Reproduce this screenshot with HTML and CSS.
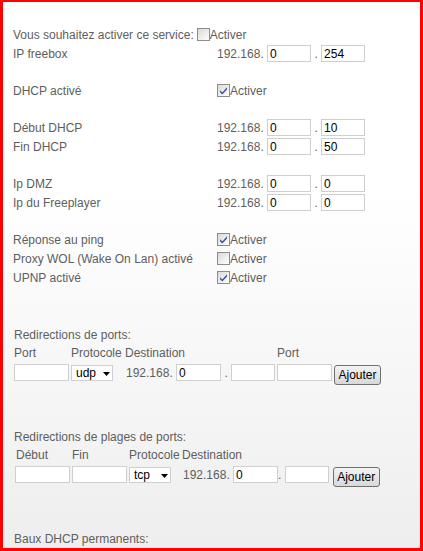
FILE: index.html
```html
<!DOCTYPE html>
<html lang="fr">
<head>
<meta charset="utf-8">
<title>Freebox</title>
<link rel="stylesheet" href="styles.css">
</head>
<body>
<div class="frame">
  <div class="form">
    <div class="row first">
      <span>Vous souhaitez activer ce service:</span><span class="cb"></span><span>Activer</span>
    </div>
    <div class="row">
      <span class="lbl">IP freebox</span>
      <span class="val">192.168. <input class="ip" value="0"> . <input class="ip" value="254"></span>
    </div>
    <div class="blank"></div>
    <div class="row">
      <span class="lbl">DHCP activé</span>
      <span class="val"><span class="cb on"><svg viewBox="0 0 11 11" width="11" height="11"><path d="M2 5.2 L4.3 7.6 L9 2.2 L9 4.4 L4.3 9.6 L2 7.3 Z" fill="#3b4f9c"/></svg></span>Activer</span>
    </div>
    <div class="blank"></div>
    <div class="row">
      <span class="lbl">Début DHCP</span>
      <span class="val">192.168. <input class="ip" value="0"> . <input class="ip" value="10"></span>
    </div>
    <div class="row">
      <span class="lbl">Fin DHCP</span>
      <span class="val">192.168. <input class="ip" value="0"> . <input class="ip" value="50"></span>
    </div>
    <div class="blank"></div>
    <div class="row">
      <span class="lbl">Ip DMZ</span>
      <span class="val">192.168. <input class="ip" value="0"> . <input class="ip" value="0"></span>
    </div>
    <div class="row">
      <span class="lbl">Ip du Freeplayer</span>
      <span class="val">192.168. <input class="ip" value="0"> . <input class="ip" value="0"></span>
    </div>
    <div class="blank"></div>
    <div class="row">
      <span class="lbl">Réponse au ping</span>
      <span class="val"><span class="cb on"><svg viewBox="0 0 11 11" width="11" height="11"><path d="M2 5.2 L4.3 7.6 L9 2.2 L9 4.4 L4.3 9.6 L2 7.3 Z" fill="#3b4f9c"/></svg></span>Activer</span>
    </div>
    <div class="row">
      <span class="lbl">Proxy WOL (Wake On Lan) activé</span>
      <span class="val"><span class="cb"></span>Activer</span>
    </div>
    <div class="row">
      <span class="lbl">UPNP activé</span>
      <span class="val"><span class="cb on"><svg viewBox="0 0 11 11" width="11" height="11"><path d="M2 5.2 L4.3 7.6 L9 2.2 L9 4.4 L4.3 9.6 L2 7.3 Z" fill="#3b4f9c"/></svg></span>Activer</span>
    </div>
  </div>

  <div class="section s1">
    <div class="title">Redirections de ports:</div>
    <div class="heads">
      <span class="h h-port">Port</span>
      <span class="h h-proto">Protocole</span>
      <span class="h h-dest">Destination</span>
      <span class="h h-port2">Port</span>
    </div>
    <div class="inputs">
      <input class="port">
      <span class="selwrap w-proto"><select class="sel"><option>udp</option><option>tcp</option></select><svg class="arrow" viewBox="0 0 7 4" width="7" height="4"><path d="M0 0 H7 L3.5 4 Z" fill="#000"/></svg></span>
      <span class="dest">192.168. <input class="ip2" value="0"> . <input class="ip3"></span>
      <input class="port port2">
      <button class="btn" type="button">Ajouter</button>
    </div>
  </div>

  <div class="section s2">
    <div class="title">Redirections de plages de ports:</div>
    <div class="heads">
      <span class="h h-deb">Début</span>
      <span class="h h-fin">Fin</span>
      <span class="h h-proto">Protocole</span>
      <span class="h">Destination</span>
    </div>
    <div class="inputs">
      <input class="port p-deb">
      <input class="port p-fin">
      <span class="selwrap w-proto"><select class="sel"><option>tcp</option><option>udp</option></select><svg class="arrow" viewBox="0 0 7 4" width="7" height="4"><path d="M0 0 H7 L3.5 4 Z" fill="#000"/></svg></span>
      <span class="dest">192.168. <input class="ip2" value="0">. <input class="ip3"></span>
      <button class="btn btn2" type="button">Ajouter</button>
    </div>
  </div>

  <div class="section s3">
    <div class="title">Baux DHCP permanents:</div>
  </div>
</div>
</body>
</html>
```

FILE: styles.css
```css
* { box-sizing: border-box; }
html, body { margin: 0; padding: 0; }
body {
  width: 423px;
  height: 551px;
  overflow: hidden;
  font-family: "Liberation Sans", Arial, sans-serif;
  font-size: 12px;
  color: #5e5e5e;
}
.frame {
  width: 423px;
  height: 551px;
  border-style: solid;
  border-color: #f00;
  border-width: 2px 3px 3px 3px;
  background: linear-gradient(to bottom, #ffffff 0%, #ffffff 35%, #eeeeee 100%);
  padding: 23px 0 0 10px;
}
.row {
  display: flex;
  align-items: center;
  height: 19px;
  white-space: nowrap;
}
.blank { height: 18px; }
.lbl { width: 204px; flex: none; }
.val { display: flex; align-items: center; white-space: pre; }
.first .cb { margin-left: 3px; }

.cb {
  display: inline-flex;
  align-items: center;
  justify-content: center;
  width: 13px;
  height: 13px;
  border: 1px solid #8d8d8d;
  background: linear-gradient(135deg, #d9d9d6 0%, #f0f0ee 60%, #ffffff 100%);
  flex: none;
}
.cb svg { display: block; }

input, select, button {
  font-family: "Liberation Sans", Arial, sans-serif;
  font-size: 12px;
  color: #000;
  margin: 0;
}
input {
  height: 17px;
  border: 1px solid #cfcfcf;
  background: #fff;
  padding: 0 2px;
  outline: none;
}
.ip { width: 44px; }

.section { padding-left: 1px; }
.s1 { margin-top: 39px; }
.s2 { margin-top: 40px; }
.s3 { margin-top: 40px; }
.title { height: 18px; line-height: 18px; }
.heads {
  height: 18px;
  display: flex;
  align-items: center;
  white-space: nowrap;
}
.inputs {
  display: flex;
  align-items: flex-start;
  height: 26px;
  white-space: pre;
}
.inputs input { margin-top: 2px; }

.s1 .h-port { width: 57px; }
.s1 .h-proto { width: 54px; }
.s1 .h-dest { width: 152px; }
.port { width: 55px; }
.s1 .inputs .port { margin-right: 2px; }
.s1 .w-proto { width: 54px; }
.s1 .port2 { margin-right: 3px; }
.s1 .dest { width: 152px; }

.s2 .heads { padding-left: 2px; }
.s2 .h-deb { width: 56px; }
.s2 .h-fin { width: 57px; }
.s2 .h-proto { width: 53px; }
.s2 .p-deb { margin-right: 2px; margin-left: 1px; }
.s2 .p-fin { margin-right: 2px; }
.s2 .w-proto { width: 53px; }
.s2 .dest { margin-right: 4px; }

.selwrap {
  position: relative;
  display: inline-block;
  margin-top: 3px;
  height: 16px;
}
.sel {
  appearance: none;
  -webkit-appearance: none;
  width: 42px;
  height: 16px;
  border: 1px solid #cfcfcf;
  background: #fff;
  padding: 0 0 0 4px;
  border-radius: 0;
  outline: none;
}
.arrow {
  position: absolute;
  left: 32px;
  top: 7px;
  pointer-events: none;
}
.dest {
  display: inline-flex;
  align-items: center;
  height: 21px;
  padding-left: 1px;
}
.dest input { margin-top: 0; }
.ip2 { width: 45px; }
.ip3 { width: 44px; }

.btn {
  margin-top: 3px;
  height: 20px;
  width: 47px;
  padding: 0;
  border: 1px solid #707070;
  border-radius: 3px;
  background: linear-gradient(to bottom, #f4f4f4 0%, #e6e6e6 50%, #d8d8d8 100%);
  color: #000;
}
.btn2 { margin-top: 3px; }
```
